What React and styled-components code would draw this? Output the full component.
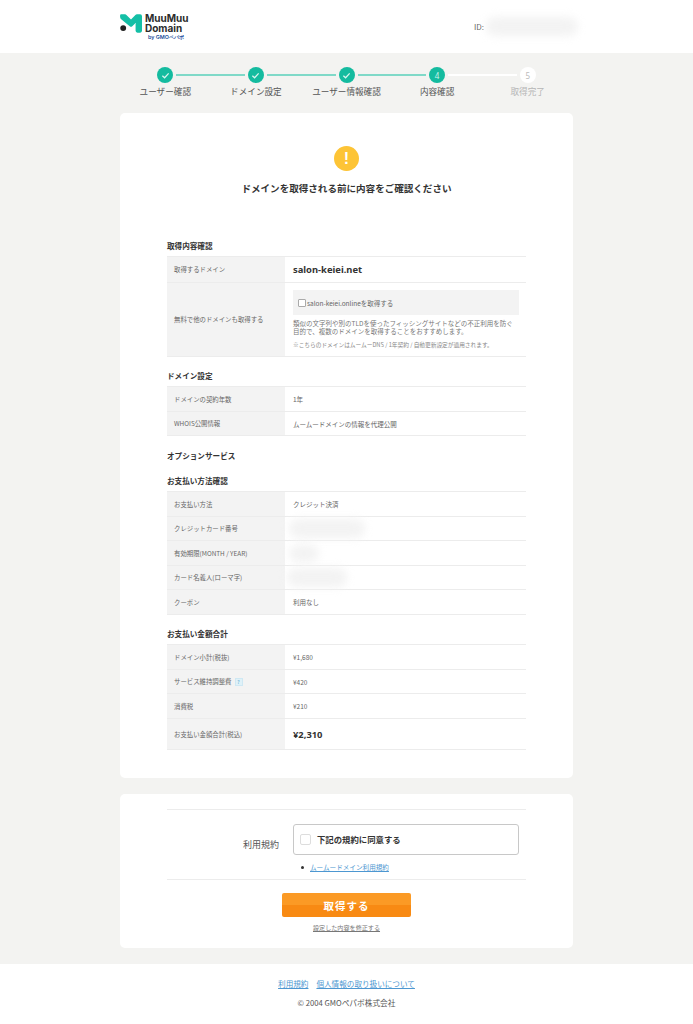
import React from "react";
import styled, { createGlobalStyle } from "styled-components";

const GlobalStyle = createGlobalStyle`
  html, body {
    margin: 0;
    padding: 0;
    background: #f3f3f1;
    color: #444;
    font-family: "Noto Sans CJK JP", "Noto Sans", sans-serif;
  }
  * { box-sizing: border-box; }
`;

const TEAL = "#14bb9f";

const Header = styled.header`
  height: 53px;
  background: #fff;
`;

const HeaderInner = styled.div`
  width: 453px;
  height: 100%;
  margin: 0 auto;
  display: flex;
  align-items: center;
  justify-content: space-between;
`;

const Logo = styled.div`
  display: flex;
  align-items: flex-start;
  gap: 3px;
  height: 30px;
  margin-top: 3px;
`;

const LogoWords = styled.div`
  display: flex;
  flex-direction: column;
  font-family: "Inter", sans-serif;
  font-weight: 700;
  font-size: 10px;
  line-height: 10px;
  color: #2b2b2b;
`;

const LogoSub = styled.span`
  font-size: 5.4px;
  line-height: 8px;
  font-weight: 600;
  color: #1c4f9c;
  padding-left: 3px;
  white-space: nowrap;
`;

const UserId = styled.div`
  display: flex;
  align-items: center;
  gap: 2px;
  font-size: 8px;
  color: #666;
  margin-right: -5px;
`;

const Blur = styled.span`
  display: block;
  width: ${({ $w }) => $w}px;
  height: ${({ $h }) => $h}px;
  margin-left: ${({ $ml }) => $ml || 0}px;
  border-radius: 9px;
  background: #f3f3f3;
  filter: blur(4px);
`;

const Steps = styled.ol`
  width: 453px;
  height: 60px;
  margin: 0 auto;
  padding: 14px 0 0;
  list-style: none;
  display: grid;
  grid-template-columns: repeat(5, 1fr);
`;

const Step = styled.li`
  display: flex;
  flex-direction: column;
  align-items: center;
  gap: 2px;
`;

const Track = styled.div`
  width: 100%;
  height: 16px;
  display: flex;
  align-items: center;
`;

const Line = styled.span`
  flex: 1;
  height: 2px;
  background: ${({ $tone }) =>
    $tone === "teal" ? "#7fd9c8" : $tone === "white" ? "#fff" : "transparent"};
`;

const Dot = styled.span`
  width: 16px;
  height: 16px;
  margin: 0 3px;
  border-radius: 50%;
  display: flex;
  align-items: center;
  justify-content: center;
  flex: none;
  font-family: "Noto Sans", sans-serif;
  font-size: 8px;
  background: ${({ $off }) => ($off ? "#fff" : TEAL)};
  color: ${({ $off }) => ($off ? "#bbb" : "#cdf3ec")};
`;

const StepLabel = styled.span`
  font-size: 8.6px;
  line-height: 12px;
  white-space: nowrap;
  color: ${({ $off }) => ($off ? "#b5b5b5" : "#555")};
`;

const Card = styled.section`
  width: 453px;
  margin: ${({ $mt }) => $mt || 0}px auto 0;
  background: #fff;
  border-radius: 5px;
  padding: ${({ $pad }) => $pad};
`;

const Notice = styled.div`
  display: flex;
  flex-direction: column;
  align-items: center;
  gap: 9px;
  height: 92px;
`;

const Alert = styled.span`
  width: 25px;
  height: 25px;
  border-radius: 50%;
  background: #fdc436;
  color: #fff;
  display: flex;
  align-items: center;
  justify-content: center;
  font-family: "Liberation Sans", sans-serif;
  font-weight: 700;
  font-size: 16px;
`;

const Lead = styled.h1`
  margin: 0;
  font-size: 9.55px;
  line-height: 16px;
  font-weight: 700;
  color: #333;
`;

const Heading = styled.h2`
  margin: ${({ $mt }) => $mt || 0}px 0 0;
  height: 18px;
  font-size: 7.6px;
  line-height: 16px;
  font-weight: 700;
  color: #333;
`;

const Table = styled.div`
  border-top: 1px solid #ececec;
`;

const Row = styled.div`
  display: grid;
  grid-template-columns: 118px 1fr;
  height: ${({ $h }) => $h}px;
  border-bottom: 1px solid #ececec;
`;

const Label = styled.div`
  display: flex;
  align-items: center;
  gap: 3px;
  padding-left: 7px;
  background: #f3f3f3;
  font-size: 6.4px;
  color: #666;
`;

const Value = styled.div`
  display: flex;
  align-items: center;
  padding-left: 8px;
  font-family: ${({ $big }) => ($big ? '"Noto Sans", sans-serif' : "inherit")};
  font-size: ${({ $big }) => ($big ? "9.4px" : "6.5px")};
  font-weight: ${({ $big }) => ($big ? 700 : 400)};
  color: ${({ $big }) => ($big ? "#333" : "#666")};
`;

const ExtraCell = styled.div`
  padding: 7px 7px 0 8px;
`;

const ExtraOption = styled.label`
  height: 25px;
  padding-left: 5px;
  display: flex;
  align-items: center;
  gap: 1px;
  background: #f3f3f3;
  font-size: 6.5px;
  color: #666;
`;

const TinyBox = styled.span`
  width: 8px;
  height: 8px;
  border: 1px solid #aaa;
  background: #fff;
  border-radius: 1px;
`;

const ExtraText = styled.p`
  margin: 4px 0 0;
  font-size: 6.5px;
  line-height: 8px;
  color: #777;
`;

const ExtraNote = styled.p`
  margin: 6px 0 0;
  font-size: 5.7px;
  line-height: 8px;
  color: #888;
`;

const HelpBadge = styled.span`
  width: 8px;
  height: 8px;
  display: inline-flex;
  align-items: center;
  justify-content: center;
  background: #dff1f8;
  color: #55a9d0;
  border: 1px solid #cfe8f3;
  font-size: 5px;
`;

const TermsRow = styled.div`
  display: grid;
  grid-template-columns: 126px 226px;
  align-items: center;
  border-top: 1px solid #ececec;
  padding-top: 14px;
`;

const TermsLabel = styled.div`
  font-size: 9px;
  color: #555;
  text-align: right;
  padding: 10px 14px 0 0;
`;

const AgreeBox = styled.label`
  height: 31px;
  border: 1px solid #c8c8c8;
  border-radius: 3px;
  display: flex;
  align-items: center;
  gap: 6px;
  padding: 0 6px 1px;
  font-size: 8.4px;
  font-weight: 700;
  color: #333;
`;

const BigCheck = styled.span`
  width: 11px;
  height: 11px;
  border: 1px solid #ddd;
  border-radius: 2px;
`;

const TermsList = styled.ul`
  margin: 7px 0 0;
  padding: 0 0 7px 134px;
  list-style: none;
  border-bottom: 1px solid #ececec;
  font-size: 6.6px;
  line-height: 10px;
  color: #333;
`;

const TermsItem = styled.li`
  display: flex;
  align-items: center;
  gap: 6px;

  &::before {
    content: "";
    width: 3px;
    height: 3px;
    border-radius: 50%;
    background: #333;
  }
`;

const BlueLink = styled.a`
  color: #4d97d1;
  text-decoration: underline;
`;

const Submit = styled.button`
  display: block;
  width: 129px;
  height: 24px;
  margin: 13px auto 0;
  border: 0;
  border-radius: 2px;
  background: linear-gradient(#fb9a25 50%, #f88a13 50%);
  color: #fff;
  font-family: inherit;
  font-size: 10.5px;
  font-weight: 700;
  letter-spacing: 1px;
`;

const BackLink = styled.a`
  display: block;
  margin-top: 6px;
  text-align: center;
  font-size: 6.1px;
  line-height: 10px;
  color: #777;
  text-decoration: underline;
`;

const Footer = styled.footer`
  margin-top: 16px;
  height: 60px;
  background: #fff;
  padding-top: 14px;
  text-align: center;
`;

const FooterLinks = styled.div`
  display: flex;
  justify-content: center;
  gap: 8px;
  font-size: 7.6px;
  line-height: 12px;
`;

const Copy = styled.div`
  margin-top: 7px;
  font-size: 7.7px;
  line-height: 12px;
  color: #555;
`;

const CheckIcon = () => (
  <svg width="9" height="9" viewBox="0 0 10 10" fill="none" stroke="#d8f5ef" strokeWidth="1.4">
    <path d="M1.5 5.2 4 7.5 8.5 2.7" />
  </svg>
);

const LogoMark = () => (
  <svg width="22" height="19" viewBox="0 0 24 20" style={{ marginTop: 1 }}>
    <path
      d="M1 0h4.500a2 2 0 0 1 1.500.7L12 5.500 16.800.8A2.400 2.400 0 0 1 18.500 0H22a2 2 0 0 1 2 2v16a2 2 0 0 1-2 2h-3a2 2 0 0 1-2-2V9.500l-3.600 3.400a2 2 0 0 1-2.800 0L1 5C-.3 3.600-.2 0 1 0Z"
      fill="#14bfa6"
    />
    <circle cx="3.500" cy="15" r="3.200" fill="#222" />
  </svg>
);

const steps = [
  { label: "ユーザー確認", done: true },
  { label: "ドメイン設定", done: true },
  { label: "ユーザー情報確認", done: true },
  { label: "内容確認", num: 4 },
  { label: "取得完了", num: 5, off: true },
];

export default function App() {
  return (
    <>
      <GlobalStyle />
      <Header>
        <HeaderInner>
          <Logo>
            <LogoMark />
            <LogoWords>
              <span>MuuMuu</span>
              <span>Domain</span>
              <LogoSub>by GMOペパボ</LogoSub>
            </LogoWords>
          </Logo>
          <UserId>
            ID:
            <Blur $w={92} $h={19} />
          </UserId>
        </HeaderInner>
      </Header>

      <Steps>
        {steps.map((step, i) => (
          <Step key={step.label}>
            <Track>
              <Line $tone={i === 0 ? "none" : i < 4 ? "teal" : "white"} />
              <Dot $off={step.off}>{step.done ? <CheckIcon /> : step.num}</Dot>
              <Line $tone={i === 4 ? "none" : i < 3 ? "teal" : "white"} />
            </Track>
            <StepLabel $off={step.off}>{step.label}</StepLabel>
          </Step>
        ))}
      </Steps>

      <Card $pad="33px 47px 28px">
        <Notice>
          <Alert>!</Alert>
          <Lead>ドメインを取得される前に内容をご確認ください</Lead>
        </Notice>

        <Heading>取得内容確認</Heading>
        <Table>
          <Row $h={26}>
            <Label>取得するドメイン</Label>
            <Value $big>salon-keiei.net</Value>
          </Row>
          <Row $h={74}>
            <Label>無料で他のドメインも取得する</Label>
            <ExtraCell>
              <ExtraOption>
                <TinyBox />
                salon-keiei.onlineを取得する
              </ExtraOption>
              <ExtraText>
                類似の文字列や別のTLDを使ったフィッシングサイトなどの不正利用を防ぐ目的で、複数のドメインを取得することをおすすめします。
              </ExtraText>
              <ExtraNote>※こちらのドメインはムームーDNS / 1年契約 / 自動更新設定が適用されます。</ExtraNote>
            </ExtraCell>
          </Row>
        </Table>

        <Heading $mt={11}>ドメイン設定</Heading>
        <Table>
          <Row $h={25}>
            <Label>ドメインの契約年数</Label>
            <Value>1年</Value>
          </Row>
          <Row $h={24}>
            <Label>WHOIS公開情報</Label>
            <Value>ムームードメインの情報を代理公開</Value>
          </Row>
        </Table>

        <Heading $mt={12}>オプションサービス</Heading>
        <Heading $mt={7}>お支払い方法確認</Heading>
        <Table>
          <Row $h={25}>
            <Label>お支払い方法</Label>
            <Value>クレジット決済</Value>
          </Row>
          <Row $h={24}>
            <Label>クレジットカード番号</Label>
            <Value>
              <Blur $w={76} $h={19} $ml={-4} />
            </Value>
          </Row>
          <Row $h={25}>
            <Label>有効期限(MONTH / YEAR)</Label>
            <Value>
              <Blur $w={30} $h={17} $ml={-4} />
            </Value>
          </Row>
          <Row $h={24}>
            <Label>カード名義人(ローマ字)</Label>
            <Value>
              <Blur $w={60} $h={19} $ml={-6} />
            </Value>
          </Row>
          <Row $h={25}>
            <Label>クーポン</Label>
            <Value>利用なし</Value>
          </Row>
        </Table>

        <Heading $mt={11}>お支払い金額合計</Heading>
        <Table>
          <Row $h={25}>
            <Label>ドメイン小計(税抜)</Label>
            <Value>¥1,680</Value>
          </Row>
          <Row $h={24}>
            <Label>
              サービス維持調整費
              <HelpBadge>?</HelpBadge>
            </Label>
            <Value>¥420</Value>
          </Row>
          <Row $h={25}>
            <Label>消費税</Label>
            <Value>¥210</Value>
          </Row>
          <Row $h={31}>
            <Label>お支払い金額合計(税込)</Label>
            <Value $big>¥2,310</Value>
          </Row>
        </Table>
      </Card>

      <Card $mt={16} $pad="15px 47px 15px">
        <TermsRow>
          <TermsLabel>利用規約</TermsLabel>
          <AgreeBox>
            <BigCheck />
            下記の規約に同意する
          </AgreeBox>
        </TermsRow>
        <TermsList>
          <TermsItem>
            <BlueLink>ムームードメイン利用規約</BlueLink>
          </TermsItem>
        </TermsList>
        <Submit>取得する</Submit>
        <BackLink>設定した内容を修正する</BackLink>
      </Card>

      <Footer>
        <FooterLinks>
          <BlueLink>利用規約</BlueLink>
          <BlueLink>個人情報の取り扱いについて</BlueLink>
        </FooterLinks>
        <Copy>© 2004 GMOペパボ株式会社</Copy>
      </Footer>
    </>
  );
}
